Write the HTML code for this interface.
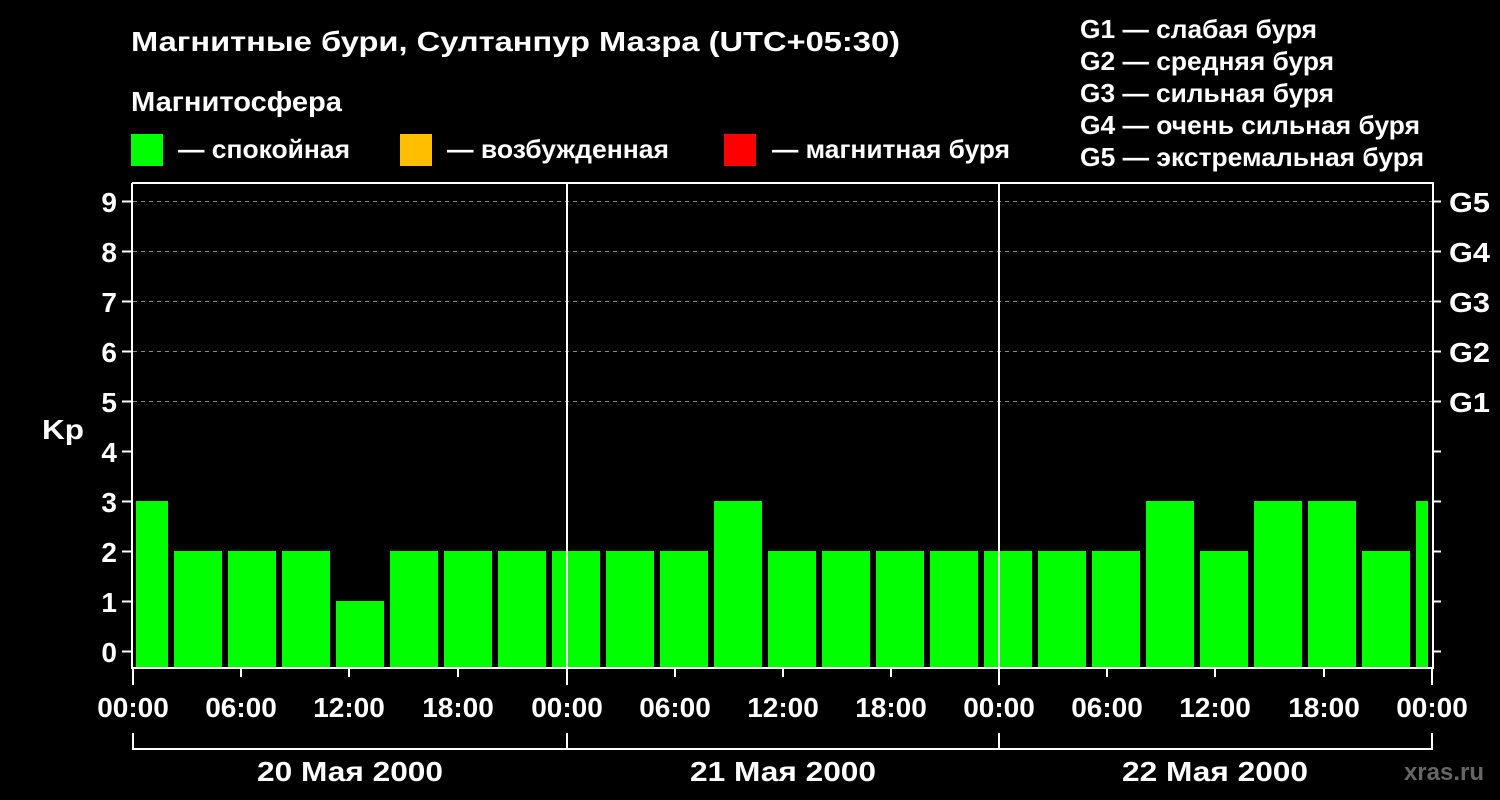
<!DOCTYPE html>
<html><head><meta charset="utf-8"><style>
body{margin:0;background:#000;width:1500px;height:800px;overflow:hidden}
svg{display:block;font-family:"Liberation Sans",Arial,sans-serif;font-weight:bold}
</style></head><body>
<svg width="1500" height="800" viewBox="0 0 1500 800">
<rect width="1500" height="800" fill="#000"/>
<g fill="#fff" font-size="28">
<text x="131" y="51" textLength="769" lengthAdjust="spacingAndGlyphs">Магнитные бури, Султанпур Мазра (UTC+05:30)</text>
<text x="131" y="111" textLength="211" lengthAdjust="spacingAndGlyphs">Магнитосфера</text>
</g>
<g fill="#fff" font-size="26">
<text x="1080" y="38" textLength="237" lengthAdjust="spacingAndGlyphs">G1 — слабая буря</text>
<text x="1080" y="70" textLength="254" lengthAdjust="spacingAndGlyphs">G2 — средняя буря</text>
<text x="1080" y="102" textLength="254" lengthAdjust="spacingAndGlyphs">G3 — сильная буря</text>
<text x="1080" y="134" textLength="340" lengthAdjust="spacingAndGlyphs">G4 — очень сильная буря</text>
<text x="1080" y="166" textLength="344" lengthAdjust="spacingAndGlyphs">G5 — экстремальная буря</text>
<text x="178" y="158" textLength="172" lengthAdjust="spacingAndGlyphs">— спокойная</text>
<text x="447" y="158" textLength="222" lengthAdjust="spacingAndGlyphs">— возбужденная</text>
<text x="772" y="158" textLength="238" lengthAdjust="spacingAndGlyphs">— магнитная буря</text>
</g>
<rect x="131" y="134" width="32" height="32" fill="#00ff00"/>
<rect x="400" y="134" width="32" height="32" fill="#ffbf00"/>
<rect x="724" y="134" width="32" height="32" fill="#ff0000"/>
<g stroke="#888" stroke-dasharray="4,4" stroke-width="1">
<line x1="133" x2="1432" y1="201.5" y2="201.5"/>
<line x1="133" x2="1432" y1="251.5" y2="251.5"/>
<line x1="133" x2="1432" y1="301.5" y2="301.5"/>
<line x1="133" x2="1432" y1="351.5" y2="351.5"/>
<line x1="133" x2="1432" y1="401.5" y2="401.5"/>
</g>
<g fill="#00ff00">
<rect x="136" y="501" width="32" height="166"/>
<rect x="174" y="551" width="48" height="116"/>
<rect x="228" y="551" width="48" height="116"/>
<rect x="282" y="551" width="48" height="116"/>
<rect x="336" y="601" width="48" height="66"/>
<rect x="390" y="551" width="48" height="116"/>
<rect x="444" y="551" width="48" height="116"/>
<rect x="498" y="551" width="48" height="116"/>
<rect x="552" y="551" width="48" height="116"/>
<rect x="606" y="551" width="48" height="116"/>
<rect x="660" y="551" width="48" height="116"/>
<rect x="714" y="501" width="48" height="166"/>
<rect x="768" y="551" width="48" height="116"/>
<rect x="822" y="551" width="48" height="116"/>
<rect x="876" y="551" width="48" height="116"/>
<rect x="930" y="551" width="48" height="116"/>
<rect x="984" y="551" width="48" height="116"/>
<rect x="1038" y="551" width="48" height="116"/>
<rect x="1092" y="551" width="48" height="116"/>
<rect x="1146" y="501" width="48" height="166"/>
<rect x="1200" y="551" width="48" height="116"/>
<rect x="1254" y="501" width="48" height="166"/>
<rect x="1308" y="501" width="48" height="166"/>
<rect x="1362" y="551" width="48" height="116"/>
<rect x="1416" y="501" width="12" height="166"/>
</g>
<g stroke="#fff" stroke-width="2" fill="none">
<path d="M132 183V668H1433V183H132"/>
<line x1="567" y1="183" x2="567" y2="668"/>
<line x1="999" y1="183" x2="999" y2="668"/>
<path d="M122 201.5H132M122 251.5H132M122 301.5H132M122 351.5H132M122 401.5H132M122 451.5H132M122 501.5H132M122 551.5H132M122 601.5H132M122 651.5H132"/>
<path d="M1433 201.5H1441M1433 251.5H1441M1433 301.5H1441M1433 351.5H1441M1433 401.5H1441M1433 451.5H1441M1433 501.5H1441M1433 551.5H1441M1433 601.5H1441M1433 651.5H1441"/>
<path d="M133 668V685M567 668V685M999 668V685M1432 668V685M241 668V677M349 668V677M458 668V677M675 668V677M783 668V677M891 668V677M1107 668V677M1215 668V677M1324 668V677"/>
<path d="M133 733V749H1432V733M567 733V749M999 733V749"/>
</g>
<g fill="#fff" font-size="28" text-anchor="end">
<text x="117" y="212">9</text><text x="117" y="262">8</text><text x="117" y="312">7</text><text x="117" y="362">6</text><text x="117" y="412">5</text><text x="117" y="462">4</text><text x="117" y="512">3</text><text x="117" y="562">2</text><text x="117" y="612">1</text><text x="117" y="662">0</text>
</g>
<text x="42" y="439" fill="#fff" font-size="28" textLength="42" lengthAdjust="spacingAndGlyphs">Kp</text>
<g fill="#fff" font-size="28">
<text x="1449" y="212" textLength="41" lengthAdjust="spacingAndGlyphs">G5</text><text x="1449" y="262" textLength="41" lengthAdjust="spacingAndGlyphs">G4</text><text x="1449" y="312" textLength="41" lengthAdjust="spacingAndGlyphs">G3</text><text x="1449" y="362" textLength="41" lengthAdjust="spacingAndGlyphs">G2</text><text x="1449" y="412" textLength="41" lengthAdjust="spacingAndGlyphs">G1</text>
</g>
<g fill="#fff" font-size="28" text-anchor="middle">
<text x="133" y="717">00:00</text><text x="241" y="717">06:00</text><text x="349" y="717">12:00</text><text x="458" y="717">18:00</text>
<text x="567" y="717">00:00</text><text x="675" y="717">06:00</text><text x="783" y="717">12:00</text><text x="891" y="717">18:00</text>
<text x="999" y="717">00:00</text><text x="1107" y="717">06:00</text><text x="1215" y="717">12:00</text><text x="1324" y="717">18:00</text>
<text x="1432" y="717">00:00</text>
</g>
<g fill="#fff" font-size="28">
<text x="257" y="781" textLength="186" lengthAdjust="spacingAndGlyphs">20 Мая 2000</text><text x="690" y="781" textLength="186" lengthAdjust="spacingAndGlyphs">21 Мая 2000</text><text x="1122" y="781" textLength="186" lengthAdjust="spacingAndGlyphs">22 Мая 2000</text>
</g>
<text x="1484" y="780" fill="#666" font-size="24" text-anchor="end">xras.ru</text>
</svg>
</body></html>
